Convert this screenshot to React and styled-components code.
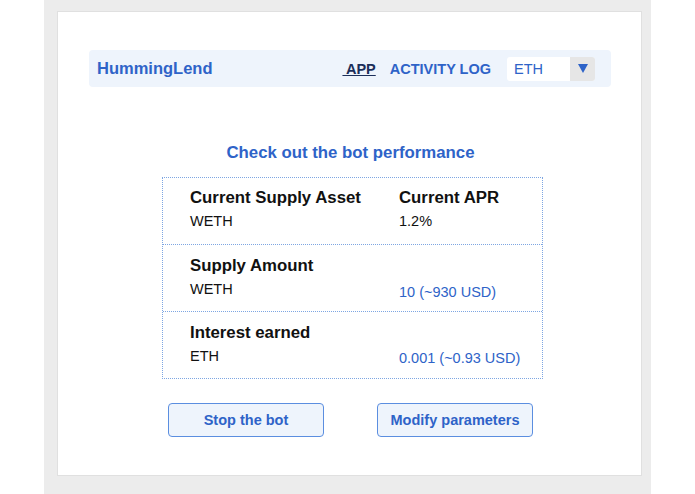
import React from 'react';
import styled, { createGlobalStyle } from 'styled-components';

const GlobalStyle = createGlobalStyle`
    body {
        margin: 0;
        background: #ffffff;
        font-family: "Liberation Sans", Arial, sans-serif;
    }
`;

const Backdrop = styled.div`
    margin-left: 44px;
    width: 607px;
    min-height: 494px;
    box-sizing: border-box;
    padding: 11px 9px 18px 13px;
    background: #ececec;
`;

const Card = styled.div`
    height: 465px;
    box-sizing: border-box;
    background: #ffffff;
    border: 1px solid #e0e0e0;
    padding: 38px 30px 0 31px;
`;

const NavBar = styled.nav`
    display: flex;
    align-items: center;
    height: 37px;
    padding: 0 16px 0 8px;
    background: #eef4fc;
    border-radius: 4px;
`;

const Brand = styled.div`
    flex: 1;
    color: #2e63c8;
    font-size: 16.5px;
    font-weight: bold;
`;

const NavLink = styled.a`
    color: ${(p) => (p.active ? '#1c2f5a' : '#2e63c8')};
    text-decoration: ${(p) => (p.active ? 'underline' : 'none')};
    font-size: 14.5px;
    font-weight: bold;
    margin-right: ${(p) => p.gap}px;
    white-space: pre;
`;

const Select = styled.div`
    display: flex;
    width: 88px;
    height: 24px;
    background: #ffffff;
    border-radius: 3px;
    overflow: hidden;
`;

const SelectValue = styled.span`
    flex: 1;
    padding-left: 7px;
    line-height: 24px;
    color: #2e63c8;
    font-size: 14.5px;
`;

const SelectArrow = styled.span`
    display: flex;
    align-items: center;
    justify-content: center;
    width: 25px;
    background: #e6e6e6;

    &::after {
        content: '';
        border-left: 5px solid transparent;
        border-right: 5px solid transparent;
        border-top: 9px solid #2e63c8;
    }
`;

const Heading = styled.h2`
    margin: 56px 0 14px;
    padding-left: 1px;
    text-align: center;
    color: #2e63c8;
    font-size: 16.8px;
    font-weight: bold;
    line-height: 20px;
`;

const Table = styled.div`
    width: 381px;
    box-sizing: border-box;
    margin-left: 73px;
    border: 1px dotted #7ea6e2;
`;

const Row = styled.div`
    display: grid;
    grid-template-columns: 209px 1fr;
    align-content: start;
    row-gap: 6px;
    height: ${(p) => (p.first ? 66 : 67)}px;
    box-sizing: border-box;
    padding: ${(p) => (p.first ? 10 : 11)}px 0 0 27px;
    border-top: ${(p) => (p.first ? 'none' : '1px dotted #7ea6e2')};
`;

const Label = styled.div`
    color: #111111;
    font-size: 16.8px;
    font-weight: bold;
    line-height: 19px;
`;

const Value = styled.div`
    color: ${(p) => (p.accent ? '#2e63c8' : '#111111')};
    font-size: 14.5px;
    line-height: 17px;
    padding-top: ${(p) => p.drop || 0}px;
`;

const Actions = styled.div`
    display: flex;
    justify-content: center;
    gap: 53px;
    margin-top: 24px;
    padding-left: 1px;
`;

const Button = styled.button`
    width: 156px;
    height: 34px;
    background: #eef4fc;
    border: 1px solid #5b8ee0;
    border-radius: 4px;
    color: #2e63c8;
    font-family: "Liberation Sans", Arial, sans-serif;
    font-size: 14.5px;
    font-weight: bold;
`;

const rows = [
    { label: 'Current Supply Asset', asset: 'WETH', right: 'Current APR', value: '1.2%' },
    { label: 'Supply Amount', asset: 'WETH', value: '10 (~930 USD)', accent: true, drop: 3 },
    { label: 'Interest earned', asset: 'ETH', value: '0.001 (~0.93 USD)', accent: true, drop: 2 },
];

const App = () => {
    return (
        <>
            <GlobalStyle />
            <Backdrop>
                <Card>
                    <NavBar>
                        <Brand>HummingLend</Brand>
                        <NavLink active gap={14}>{' APP'}</NavLink>
                        <NavLink gap={16}>ACTIVITY LOG</NavLink>
                        <Select>
                            <SelectValue>ETH</SelectValue>
                            <SelectArrow />
                        </Select>
                    </NavBar>
                    <Heading>Check out the bot performance</Heading>
                    <Table>
                        {rows.map((r, i) => (
                            <Row key={r.label} first={i === 0}>
                                <Label>{r.label}</Label>
                                <Label>{r.right || ''}</Label>
                                <Value>{r.asset}</Value>
                                <Value accent={r.accent} drop={r.drop}>
                                    {r.value}
                                </Value>
                            </Row>
                        ))}
                    </Table>
                    <Actions>
                        <Button>Stop the bot</Button>
                        <Button>Modify parameters</Button>
                    </Actions>
                </Card>
            </Backdrop>
        </>
    );
};

export default App;
